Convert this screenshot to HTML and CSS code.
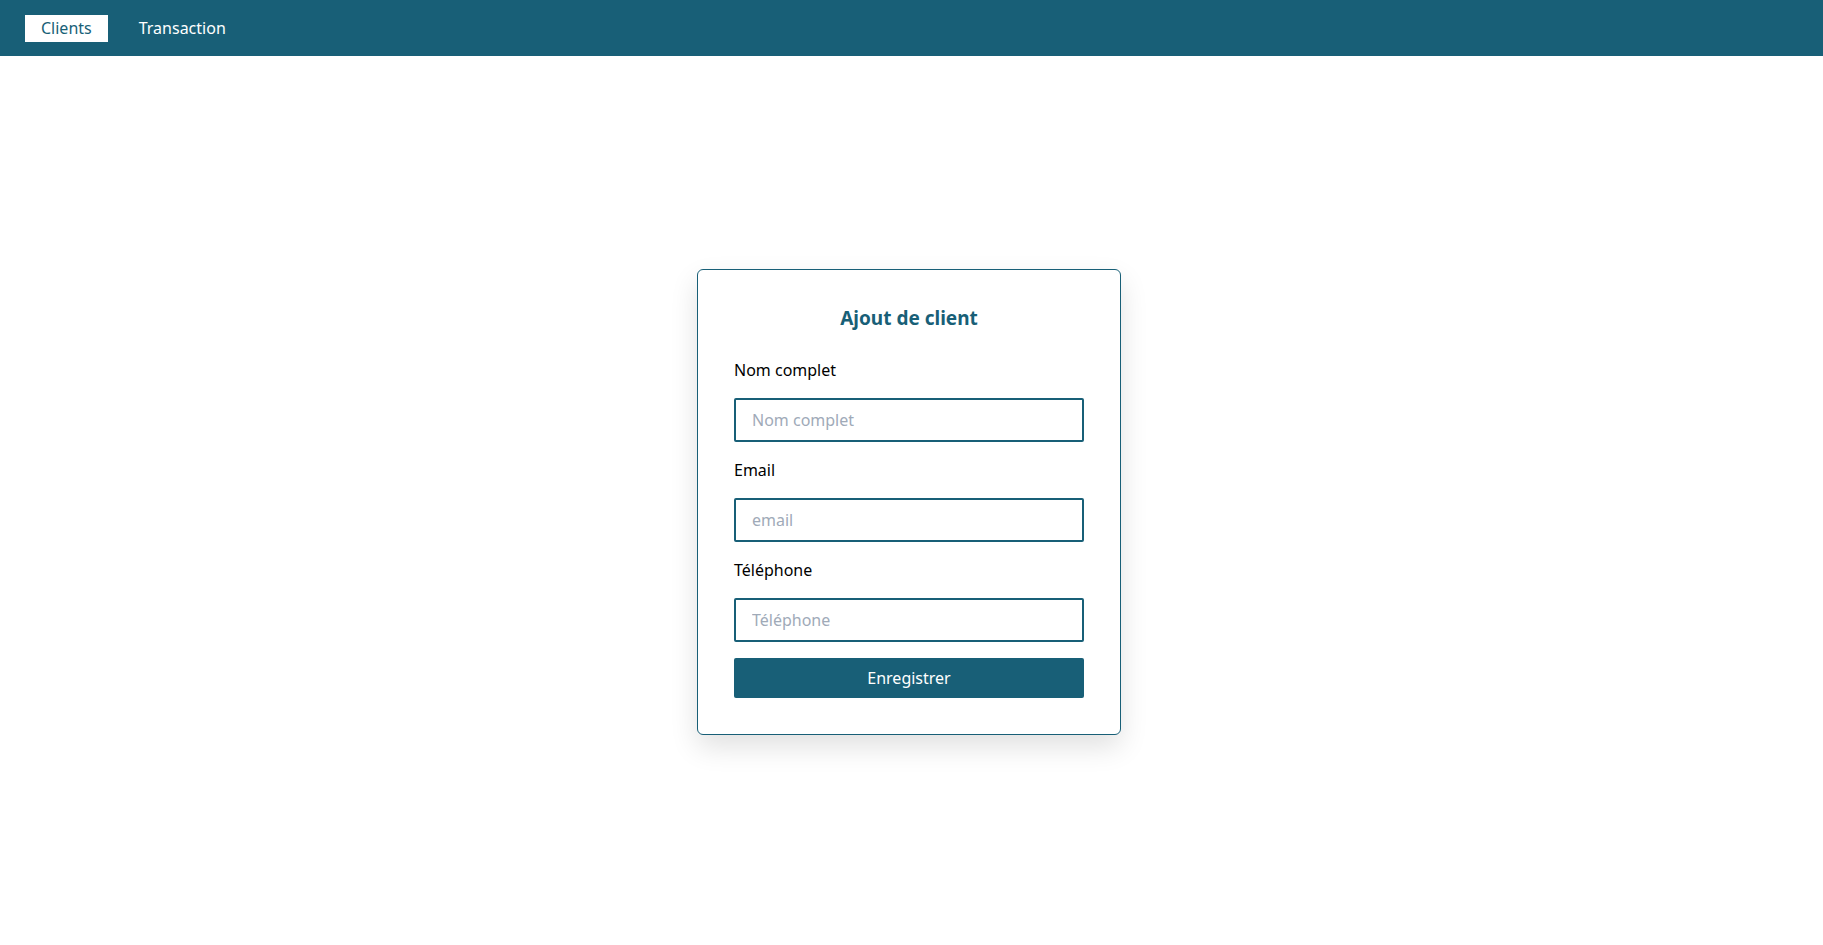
FILE: index.html
```html
<!DOCTYPE html>
<html lang="fr">
<head>
<meta charset="utf-8">
<title>Ajout de client</title>
<link rel="stylesheet" href="styles.css">
</head>
<body>
<nav class="topbar">
  <a class="nav-link active" href="#">Clients</a>
  <a class="nav-link" href="#">Transaction</a>
</nav>
<main class="content">
  <form class="card">
    <h2 class="card-title">Ajout de client</h2>
    <label class="field-label" for="nom">Nom complet</label>
    <input class="field-input" id="nom" type="text" placeholder="Nom complet">
    <label class="field-label" for="email">Email</label>
    <input class="field-input" id="email" type="text" placeholder="email">
    <label class="field-label" for="tel">Téléphone</label>
    <input class="field-input" id="tel" type="text" placeholder="Téléphone">
    <button class="submit-btn" type="button">Enregistrer</button>
  </form>
</main>
</body>
</html>
```

FILE: styles.css
```css
* { box-sizing: border-box; }
html, body { margin: 0; padding: 0; }
body {
  font-family: "Noto Sans", "Open Sans", sans-serif;
  color: #000;
  background: #fff;
  height: 100vh;
  display: flex;
  flex-direction: column;
}
.topbar {
  height: 56px;
  background: #185f77;
  display: flex;
  align-items: center;
  padding-left: 25px;
  gap: 15px;
  flex-shrink: 0;
}
.nav-link {
  height: 27px;
  padding: 0 16px;
  display: flex;
  align-items: center;
  font-size: 16px;
  color: #fff;
  text-decoration: none;
}
.nav-link.active {
  background: #fff;
  color: #185f77;
}
.content {
  flex: 1;
  display: flex;
  align-items: center;
  justify-content: center;
  padding-right: 5px;
  padding-top: 2px;
}
.card {
  width: 424px;
  border: 1px solid #185f77;
  border-radius: 6px;
  padding: 34px 36px 36px;
  display: flex;
  flex-direction: column;
  box-shadow: 0 12px 28px rgba(0, 0, 0, 0.12);
  background: #fff;
}
.card-title {
  margin: 0 0 26px;
  text-align: center;
  font-size: 19px;
  line-height: 28px;
  font-weight: 700;
  color: #185f77;
}
.field-label {
  font-size: 16px;
  line-height: 24px;
  margin-bottom: 16px;
}
.field-input {
  height: 44px;
  border: 2px solid #185f77;
  border-radius: 2px;
  padding: 0 16px;
  font-family: inherit;
  font-size: 16px;
  margin-bottom: 16px;
  outline: none;
}
.field-input::placeholder { color: #a0aab8; }
.submit-btn {
  height: 40px;
  border: none;
  border-radius: 2px;
  background: #185f77;
  color: #fff;
  font-family: inherit;
  font-size: 16px;
  cursor: pointer;
}
```
